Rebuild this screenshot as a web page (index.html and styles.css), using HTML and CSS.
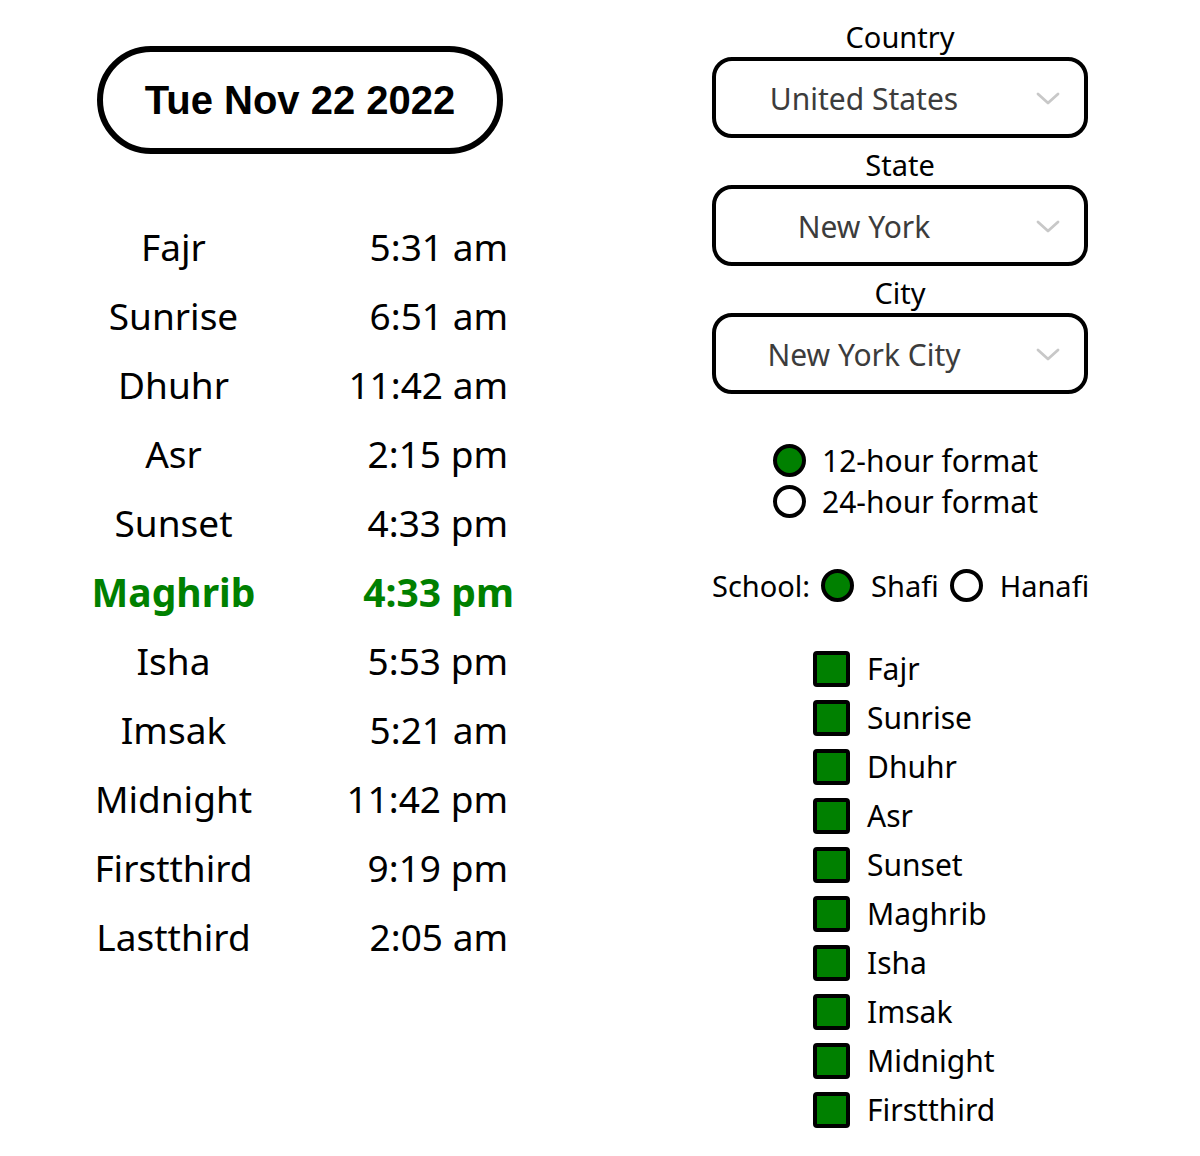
FILE: index.html
```html
<!DOCTYPE html>
<html lang="en">
<head>
<meta charset="utf-8">
<title>Prayer Times</title>
<link rel="stylesheet" href="styles.css">
</head>
<body>
<div class="page">
  <section class="left">
    <div class="date-pill">Tue Nov 22 2022</div>
    <div class="times">
      <div class="name">Fajr</div><div class="time">5:31 am</div>
      <div class="name">Sunrise</div><div class="time">6:51 am</div>
      <div class="name">Dhuhr</div><div class="time">11:42 am</div>
      <div class="name">Asr</div><div class="time">2:15 pm</div>
      <div class="name">Sunset</div><div class="time">4:33 pm</div>
      <div class="name next">Maghrib</div><div class="time next">4:33 pm</div>
      <div class="name">Isha</div><div class="time">5:53 pm</div>
      <div class="name">Imsak</div><div class="time">5:21 am</div>
      <div class="name">Midnight</div><div class="time">11:42 pm</div>
      <div class="name">Firstthird</div><div class="time">9:19 pm</div>
      <div class="name">Lastthird</div><div class="time">2:05 am</div>
    </div>
  </section>
  <section class="right">
    <div class="field-label">Country</div>
    <div class="select"><span class="select-text">United States</span><span class="chev"><svg width="24" height="14" viewBox="0 0 24 14"><path d="M2 2 L12 11 L22 2" fill="none" stroke="#c8c8c8" stroke-width="2.8" stroke-linecap="round" stroke-linejoin="round"/></svg></span></div>
    <div class="field-label">State</div>
    <div class="select"><span class="select-text">New York</span><span class="chev"><svg width="24" height="14" viewBox="0 0 24 14"><path d="M2 2 L12 11 L22 2" fill="none" stroke="#c8c8c8" stroke-width="2.8" stroke-linecap="round" stroke-linejoin="round"/></svg></span></div>
    <div class="field-label">City</div>
    <div class="select"><span class="select-text">New York City</span><span class="chev"><svg width="24" height="14" viewBox="0 0 24 14"><path d="M2 2 L12 11 L22 2" fill="none" stroke="#c8c8c8" stroke-width="2.8" stroke-linecap="round" stroke-linejoin="round"/></svg></span></div>

    <div class="format">
      <div class="opt"><span class="radio on"></span><span>12-hour format</span></div>
      <div class="opt"><span class="radio"></span><span>24-hour format</span></div>
    </div>

    <div class="school">
      <span>School:</span>
      <span class="radio on sr"></span><span>Shafi</span>
      <span class="radio sr"></span><span>Hanafi</span>
    </div>

    <div class="checks">
      <div class="check"><span class="box"></span><span>Fajr</span></div>
      <div class="check"><span class="box"></span><span>Sunrise</span></div>
      <div class="check"><span class="box"></span><span>Dhuhr</span></div>
      <div class="check"><span class="box"></span><span>Asr</span></div>
      <div class="check"><span class="box"></span><span>Sunset</span></div>
      <div class="check"><span class="box"></span><span>Maghrib</span></div>
      <div class="check"><span class="box"></span><span>Isha</span></div>
      <div class="check"><span class="box"></span><span>Imsak</span></div>
      <div class="check"><span class="box"></span><span>Midnight</span></div>
      <div class="check"><span class="box"></span><span>Firstthird</span></div>
    </div>
  </section>
</div>
</body>
</html>
```
FILE: styles.css
```css
html, body {
  margin: 0;
  padding: 0;
  background: #fff;
}
body {
  font-family: "Noto Sans", "Open Sans", sans-serif;
  color: #000;
  height: 1156px;
  overflow: hidden;
}
.page {
  display: grid;
  grid-template-columns: 600px 600px;
}
.left {
  padding-top: 46px;
}
.date-pill {
  box-sizing: border-box;
  width: 406px;
  height: 108px;
  margin-left: 97px;
  border: 6px solid #000;
  border-radius: 54px;
  display: flex;
  align-items: center;
  justify-content: center;
  font-family: "Liberation Sans", Arial, sans-serif;
  font-weight: bold;
  font-size: 40px;
}
.times {
  margin-top: 58px;
  margin-left: 84px;
  display: grid;
  grid-template-columns: 179px 245px;
  grid-auto-rows: 69px;
  font-size: 37px;
  line-height: 69px;
}
.name {
  text-align: center;
}
.time {
  text-align: right;
}
.next {
  color: #008000;
  font-weight: bold;
  font-size: 39px;
}
.time.next {
  margin-right: -6px;
}
.right {
  padding-top: 17px;
}
.field-label {
  height: 40px;
  line-height: 40px;
  text-align: center;
  font-size: 29px;
}
.select + .field-label {
  margin-top: 7px;
}
.select {
  box-sizing: border-box;
  width: 376px;
  height: 81px;
  margin: 0 auto;
  border: 4px solid #000;
  border-radius: 20px;
  display: flex;
  align-items: center;
}
.select-text {
  flex: 1;
  text-align: center;
  font-size: 30px;
  color: #3c3c3c;
  padding-top: 2px;
}
.chev {
  width: 72px;
  display: flex;
  justify-content: center;
  align-items: center;
  padding-top: 2px;
}
.format {
  margin-top: 46px;
  margin-left: 173px;
  font-size: 30px;
}
.opt {
  height: 41px;
  display: flex;
  align-items: center;
  gap: 16px;
}
.radio {
  box-sizing: border-box;
  width: 33px;
  height: 33px;
  border: 4px solid #000;
  border-radius: 50%;
  background: #fff;
  flex: none;
}
.radio.on {
  background: #008000;
}
.school {
  margin-top: 43px;
  margin-left: 112px;
  height: 41px;
  display: flex;
  align-items: center;
  font-size: 29px;
}
.radio.sr {
  margin: 0 17px 0 11px;
}
.checks {
  margin-top: 38px;
  margin-left: 213px;
  font-size: 30px;
}
.check {
  height: 49px;
  display: flex;
  align-items: center;
  gap: 17px;
}
.box {
  box-sizing: border-box;
  width: 37px;
  height: 36px;
  border: 4px solid #000;
  border-radius: 4px;
  background: #008000;
  flex: none;
}
```
